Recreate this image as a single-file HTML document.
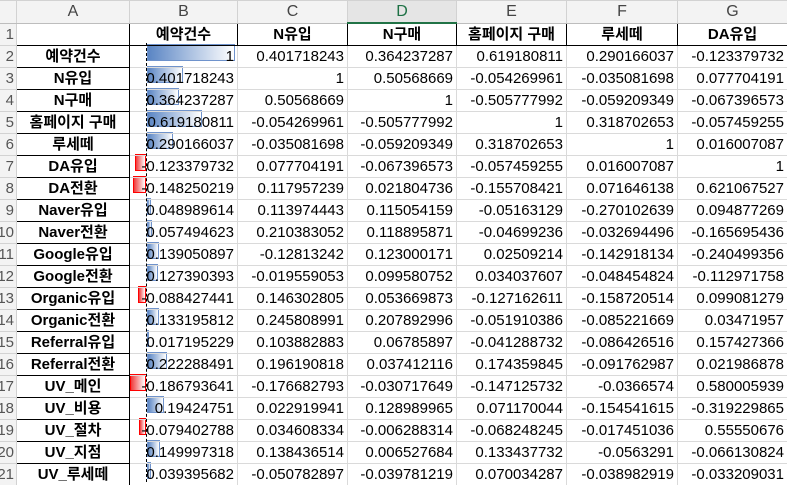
<!DOCTYPE html>
<html><head><meta charset="utf-8"><style>
html,body{margin:0;padding:0;background:#fff;width:787px;height:485px;overflow:hidden;position:relative}
body{font-family:"Liberation Sans","Noto Sans CJK KR",sans-serif;font-size:15px;color:#000}
table{position:absolute;left:-14px;top:0;width:801px;border-collapse:collapse;table-layout:fixed;z-index:2}
td{height:21px;padding:0 3px 0 0;border:1px solid #dadada;text-align:right;white-space:nowrap;overflow:hidden;background:transparent;line-height:21px}
tr.h td{height:19px;background:#f3f3f3;color:#444;text-align:center;border-color:#d2d2d2;border-bottom:1px solid #bdbdbd;padding:0;font-size:16px}
tr.h td.sel{background:#e5e5e5;color:#1e7145;border-bottom:2px solid #217346}
td.rn{background:#f3f3f3;color:#555;text-align:right;padding-right:2px;border-color:#d2d2d2;font-size:15px}
td.a{font-weight:bold;text-align:center;border:1px solid #000;padding:0}
tr.r1 td{font-weight:bold;text-align:center;border-top:1px solid #000;border-bottom:1.5px solid #000;padding:0}
tr.r1 td.b{border-left:1px solid #000;border-right:1px solid #000}
tr.r1 td.rn{font-weight:normal;border-color:#d2d2d2;text-align:right;padding-right:2px}
.bar{position:absolute;height:17px;z-index:1;box-sizing:border-box}
.p{background:linear-gradient(to right,#5a85c4,#fff);border:1px solid #6f93cc}
.n{background:linear-gradient(to right,#f03a3a,#fff);border:1px solid #ff0000}
.axis{position:absolute;left:146px;top:43px;height:439px;border-left:1px dashed #000;z-index:3}
</style></head><body>
<div class="axis"></div>
<div class="bar p" style="left:147px;top:44px;width:88px"></div>
<div class="bar p" style="left:147px;top:66px;width:36px"></div>
<div class="bar p" style="left:147px;top:88px;width:32px"></div>
<div class="bar p" style="left:147px;top:110px;width:55px"></div>
<div class="bar p" style="left:147px;top:132px;width:26px"></div>
<div class="bar n" style="left:135px;top:154px;width:11px"></div>
<div class="bar n" style="left:133px;top:176px;width:13px"></div>
<div class="bar p" style="left:147px;top:198px;width:4px"></div>
<div class="bar p" style="left:147px;top:220px;width:5px"></div>
<div class="bar p" style="left:147px;top:242px;width:12px"></div>
<div class="bar p" style="left:147px;top:264px;width:11px"></div>
<div class="bar n" style="left:138px;top:286px;width:8px"></div>
<div class="bar p" style="left:147px;top:308px;width:12px"></div>
<div class="bar p" style="left:147px;top:330px;width:2px"></div>
<div class="bar p" style="left:147px;top:352px;width:20px"></div>
<div class="bar n" style="left:130px;top:374px;width:16px"></div>
<div class="bar p" style="left:147px;top:396px;width:17px"></div>
<div class="bar n" style="left:139px;top:418px;width:7px"></div>
<div class="bar p" style="left:147px;top:440px;width:13px"></div>
<div class="bar p" style="left:147px;top:462px;width:4px"></div>
<table>
<colgroup><col style="width:30px"><col style="width:113px"><col style="width:108px"><col style="width:110px"><col style="width:109px"><col style="width:110px"><col style="width:111px"><col style="width:110px"></colgroup>
<tr class="h"><td class="rn"></td><td>A</td><td>B</td><td>C</td><td class="sel">D</td><td>E</td><td>F</td><td>G</td></tr>
<tr class="r1"><td class="rn">1</td><td class="a"></td><td class="b">예약건수</td><td class="b">N유입</td><td class="b">N구매</td><td class="b">홈페이지 구매</td><td class="b">루세떼</td><td class="b">DA유입</td></tr>
<tr><td class="rn">2</td><td class="a">예약건수</td><td>1</td><td>0.401718243</td><td>0.364237287</td><td>0.619180811</td><td>0.290166037</td><td>-0.123379732</td></tr>
<tr><td class="rn">3</td><td class="a">N유입</td><td>0.401718243</td><td>1</td><td>0.50568669</td><td>-0.054269961</td><td>-0.035081698</td><td>0.077704191</td></tr>
<tr><td class="rn">4</td><td class="a">N구매</td><td>0.364237287</td><td>0.50568669</td><td>1</td><td>-0.505777992</td><td>-0.059209349</td><td>-0.067396573</td></tr>
<tr><td class="rn">5</td><td class="a">홈페이지 구매</td><td>0.619180811</td><td>-0.054269961</td><td>-0.505777992</td><td>1</td><td>0.318702653</td><td>-0.057459255</td></tr>
<tr><td class="rn">6</td><td class="a">루세떼</td><td>0.290166037</td><td>-0.035081698</td><td>-0.059209349</td><td>0.318702653</td><td>1</td><td>0.016007087</td></tr>
<tr><td class="rn">7</td><td class="a">DA유입</td><td>-0.123379732</td><td>0.077704191</td><td>-0.067396573</td><td>-0.057459255</td><td>0.016007087</td><td>1</td></tr>
<tr><td class="rn">8</td><td class="a">DA전환</td><td>-0.148250219</td><td>0.117957239</td><td>0.021804736</td><td>-0.155708421</td><td>0.071646138</td><td>0.621067527</td></tr>
<tr><td class="rn">9</td><td class="a">Naver유입</td><td>0.048989614</td><td>0.113974443</td><td>0.115054159</td><td>-0.05163129</td><td>-0.270102639</td><td>0.094877269</td></tr>
<tr><td class="rn">10</td><td class="a">Naver전환</td><td>0.057494623</td><td>0.210383052</td><td>0.118895871</td><td>-0.04699236</td><td>-0.032694496</td><td>-0.165695436</td></tr>
<tr><td class="rn">11</td><td class="a">Google유입</td><td>0.139050897</td><td>-0.12813242</td><td>0.123000171</td><td>0.02509214</td><td>-0.142918134</td><td>-0.240499356</td></tr>
<tr><td class="rn">12</td><td class="a">Google전환</td><td>0.127390393</td><td>-0.019559053</td><td>0.099580752</td><td>0.034037607</td><td>-0.048454824</td><td>-0.112971758</td></tr>
<tr><td class="rn">13</td><td class="a">Organic유입</td><td>-0.088427441</td><td>0.146302805</td><td>0.053669873</td><td>-0.127162611</td><td>-0.158720514</td><td>0.099081279</td></tr>
<tr><td class="rn">14</td><td class="a">Organic전환</td><td>0.133195812</td><td>0.245808991</td><td>0.207892996</td><td>-0.051910386</td><td>-0.085221669</td><td>0.03471957</td></tr>
<tr><td class="rn">15</td><td class="a">Referral유입</td><td>0.017195229</td><td>0.103882883</td><td>0.06785897</td><td>-0.041288732</td><td>-0.086426516</td><td>0.157427366</td></tr>
<tr><td class="rn">16</td><td class="a">Referral전환</td><td>0.222288491</td><td>0.196190818</td><td>0.037412116</td><td>0.174359845</td><td>-0.091762987</td><td>0.021986878</td></tr>
<tr><td class="rn">17</td><td class="a">UV_메인</td><td>-0.186793641</td><td>-0.176682793</td><td>-0.030717649</td><td>-0.147125732</td><td>-0.0366574</td><td>0.580005939</td></tr>
<tr><td class="rn">18</td><td class="a">UV_비용</td><td>0.19424751</td><td>0.022919941</td><td>0.128989965</td><td>0.071170044</td><td>-0.154541615</td><td>-0.319229865</td></tr>
<tr><td class="rn">19</td><td class="a">UV_절차</td><td>-0.079402788</td><td>0.034608334</td><td>-0.006288314</td><td>-0.068248245</td><td>-0.017451036</td><td>0.55550676</td></tr>
<tr><td class="rn">20</td><td class="a">UV_지점</td><td>0.149997318</td><td>0.138436514</td><td>0.006527684</td><td>0.133437732</td><td>-0.0563291</td><td>-0.066130824</td></tr>
<tr><td class="rn">21</td><td class="a">UV_루세떼</td><td>0.039395682</td><td>-0.050782897</td><td>-0.039781219</td><td>0.070034287</td><td>-0.038982919</td><td>-0.033209031</td></tr>
</table>
</body></html>
